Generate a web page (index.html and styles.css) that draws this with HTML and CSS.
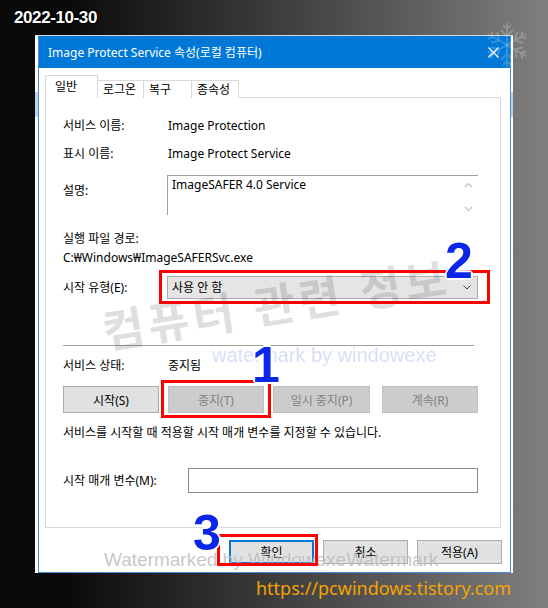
FILE: index.html
```html
<!DOCTYPE html>
<html lang="ko">
  <head>
    <meta charset="UTF-8" />
    <meta name="viewport" content="width=device-width, initial-scale=1.0" />
    <title>Image Protect Service 속성</title>
    <link rel="stylesheet" href="styles.css">
  </head>
  <body>
    <div class="stamp">2022-10-30</div>

    <div class="back-window"><div class="back-head"></div></div>

    <div class="dialog">
      <div class="titlebar">
        <span>Image Protect Service 속성(로컬 컴퓨터)</span>
        <svg class="close" width="11" height="11" viewBox="0 0 11 11">
          <path d="M0.5 0.5L10.5 10.5M10.5 0.5L0.5 10.5" stroke="#fff" stroke-width="1.2" fill="none" />
        </svg>
      </div>
      <div class="dialog-body">
        <div class="tabs">
          <div class="tab active">일반</div>
          <div class="tab">로그온</div>
          <div class="tab">복구</div>
          <div class="tab">종속성</div>
        </div>
        <div class="panel">
          <div class="row">
            <span class="label">서비스 이름:</span>
            <span class="value">Image Protection</span>
          </div>
          <div class="row row-display">
            <span class="label">표시 이름:</span>
            <span class="value">Image Protect Service</span>
          </div>
          <div class="row row-desc">
            <span class="label">설명:</span>
            <div class="textbox">
              <span>ImageSAFER 4.0 Service</span>
              <svg class="scroll" width="9" height="30" viewBox="0 0 9 30">
                <path d="M1 5L4.5 1.5L8 5M1 25L4.5 28.5L8 25" stroke="#c2c2c2" stroke-width="1.2" fill="none" />
              </svg>
            </div>
          </div>
          <div class="row row-path-label">
            <span class="label">실행 파일 경로:</span>
          </div>
          <div class="row row-path">
            <span>C:₩Windows₩ImageSAFERSvc.exe</span>
          </div>
          <div class="row row-type">
            <span class="label">시작 유형(E):</span>
            <div class="select">
              <span>사용 안 함</span>
              <svg width="8" height="5" viewBox="0 0 8 5">
                <path d="M0.5 0.5L4 4L7.5 0.5" stroke="#444" stroke-width="1" fill="none" />
              </svg>
            </div>
          </div>
          <div class="divider"></div>
          <div class="row row-status">
            <span class="label">서비스 상태:</span>
            <span class="value">중지됨</span>
          </div>
          <div class="control-buttons">
            <button class="btn">시작(S)</button>
            <button class="btn" disabled>중지(T)</button>
            <button class="btn wide" disabled>일시 중지(P)</button>
            <button class="btn" disabled>계속(R)</button>
          </div>
          <div class="row row-hint">
            <span>서비스를 시작할 때 적용할 시작 매개 변수를 지정할 수 있습니다.</span>
          </div>
          <div class="row row-param">
            <span class="label-long">시작 매개 변수(M):</span>
            <div class="input"></div>
          </div>
        </div>
        <div class="actions">
          <button class="btn dlg default">확인</button>
          <button class="btn dlg">취소</button>
          <button class="btn dlg">적용(A)</button>
        </div>
      </div>
    </div>

    <!-- overlays added on top of the screenshot -->
    <div class="wm-big">컴퓨터 관련 정보</div>
    <div class="wm-blue">watermark by windowexe</div>
    <div class="wm-grey">Watermarked by WindowexeWatermark</div>

    <div class="callout box-start"></div>
    <div class="callout box-stop"></div>
    <div class="callout box-ok"></div>

    <div class="num num-1">1</div>
    <div class="num num-2">2</div>
    <div class="num num-3">3</div>

    <svg class="flake" width="60" height="50" viewBox="-30 -25 60 50">
      <g stroke="rgba(255,255,255,0.2)" stroke-width="2" fill="none">
        <g id="arm"><path d="M0 0V-22M0-9l-6-6M0-9l6-6M0-16l-4-4M0-16l4-4" /></g>
        <use href="#arm" transform="rotate(60)" />
        <use href="#arm" transform="rotate(120)" />
        <use href="#arm" transform="rotate(180)" />
        <use href="#arm" transform="rotate(240)" />
        <use href="#arm" transform="rotate(300)" />
      </g>
    </svg>

    <div class="url">https://pcwindows.tistory.com</div>
  </body>
</html>
```

FILE: styles.css
```css
html,
body {
  margin: 0;
  padding: 0;
}
body {
  position: relative;
  width: 548px;
  height: 608px;
  overflow: hidden;
  background: linear-gradient(90deg, #0a0a0a 0%, #0a0a0a 12%, #7f7f7f 100%);
  font-family: "Noto Sans", "Noto Sans CJK KR", sans-serif;
  font-size: 12px;
  color: #000;
}
.stamp {
  padding: 9px 0 0 14px;
  font-family: "Liberation Sans", sans-serif;
  font-weight: 700;
  font-size: 17px;
  line-height: 17px;
  letter-spacing: -0.4px;
  color: #fff;
  text-shadow: 0 0 2px #000, 1px 1px 1px #000, -1px -1px 1px #000;
}

/* window behind the dialog, only its edges show */
.back-window {
  position: absolute;
  left: 35px;
  top: 35px;
  width: 478px;
  height: 537px;
  background: #fff;
  border-top: 1px solid #d8d8d8;
}
.back-head {
  margin-top: 56px;
  height: 25px;
  background: #b9d4ef;
}

.dialog {
  position: absolute;
  left: 38px;
  top: 36px;
  width: 473px;
  height: 537px;
  box-sizing: border-box;
  border: 1px solid #4a8cd2;
  border-top: 0;
  background: #fff;
}
.titlebar {
  height: 32px;
  display: flex;
  align-items: center;
  justify-content: space-between;
  padding: 0 11px 0 9px;
  background: #0078d7;
  color: #fff;
  font-size: 12px;
}
.dialog-body {
  padding: 8px 9px 0 6px;
}
.tabs {
  display: flex;
  align-items: flex-end;
  height: 22px;
  position: relative;
  z-index: 1;
  margin-bottom: -1px;
}
.tab {
  height: 18px;
  box-sizing: border-box;
  border: 1px solid #d9d9d9;
  border-bottom: 0;
  padding-left: 5px;
  line-height: 17px;
  background: #fff;
}
.tab:nth-child(2) {
  width: 46px;
  border-left: 0;
}
.tab:nth-child(3) {
  width: 48px;
  border-left: 0;
}
.tab:nth-child(4) {
  width: 47px;
  border-left: 0;
}
.tab.active {
  width: 53px;
  height: 23px;
  padding-left: 9px;
  line-height: 21px;
  border-color: #d9d9d9;
}
.panel {
  width: 456px;
  height: 431px;
  box-sizing: border-box;
  border: 1px solid #d9d9d9;
  padding: 19px 0 0 17px;
}
.row {
  display: flex;
  align-items: center;
  height: 18px;
  line-height: 18px;
  white-space: nowrap;
}
.label {
  width: 104px;
  flex: none;
}
.value {
  padding-left: 1px;
}
.row-display {
  margin-top: 10px;
}
.row-desc {
  margin-top: 12px;
  height: 40px;
  align-items: flex-start;
}
.row-desc .label {
  padding-top: 7px;
}
.textbox {
  position: relative;
  width: 311px;
  height: 40px;
  box-sizing: border-box;
  border-top: 1px solid #a0a0a0;
  border-left: 1px solid #a0a0a0;
  padding: 0 4px;
}
.scroll {
  position: absolute;
  right: 5px;
  top: 6px;
}
.row-path-label {
  margin-top: 15px;
}
.row-path {
  margin-top: 1px;
}
.row-type {
  margin-top: 9px;
  height: 23px;
}
.select {
  width: 311px;
  height: 23px;
  box-sizing: border-box;
  border: 1px solid #adadad;
  background: #e5e5e5;
  display: flex;
  align-items: center;
  justify-content: space-between;
  padding: 0 6px 0 4px;
}
.divider {
  margin-top: 46px;
  width: 411px;
  height: 1px;
  background: #a0a0a0;
}
.row-status {
  margin-top: 11px;
}
.control-buttons {
  display: flex;
  margin-top: 11px;
}
.btn {
  width: 96px;
  height: 27px;
  margin: 0 9px 0 0;
  padding: 0;
  box-sizing: border-box;
  border: 1px solid #adadad;
  background: #e1e1e1;
  font: inherit;
  color: #000;
}
.btn.wide {
  width: 97px;
  margin-right: 12px;
}
.btn:disabled {
  background: #cccccc;
  border-color: #bfbfbf;
  color: #838383;
}
.row-hint {
  margin-top: 11px;
}
.row-param {
  margin-top: 26px;
  height: 25px;
}
.label-long {
  width: 125px;
  flex: none;
}
.input {
  width: 290px;
  height: 25px;
  box-sizing: border-box;
  border: 1px solid #8a8a8a;
  background: #fff;
}
.actions {
  display: flex;
  justify-content: flex-end;
  margin: 12px -1px 0 0;
}
.btn.dlg {
  width: 85px;
  height: 24px;
  margin: 0 0 0 9px;
}
.btn.default {
  border: 1px solid #0078d7;
  box-shadow: inset 0 0 0 1px #0078d7;
}

/* watermarks */
.wm-big {
  position: absolute;
  left: 276px;
  top: 302px;
  transform: translate(-50%, -50%) rotate(-9deg);
  font-family: "Noto Sans CJK KR", sans-serif;
  font-weight: 700;
  font-size: 45px;
  letter-spacing: 4px;
  white-space: nowrap;
  color: rgba(0, 0, 0, 0.14);
}
.wm-blue {
  position: absolute;
  left: 212px;
  top: 345px;
  font-family: "Liberation Sans", sans-serif;
  font-size: 20px;
  line-height: 20px;
  color: rgba(70, 100, 230, 0.22);
  white-space: nowrap;
}
.wm-grey {
  position: absolute;
  left: 104px;
  top: 550px;
  font-family: "Liberation Sans", sans-serif;
  font-size: 19px;
  line-height: 19px;
  color: rgba(150, 150, 150, 0.55);
  text-shadow: 0 0 1px rgba(255, 255, 255, 0.6);
  white-space: nowrap;
}

/* red callout boxes and step numbers */
.callout {
  position: absolute;
  box-sizing: border-box;
  border: 3px solid #f00;
}
.box-start {
  left: 159px;
  top: 270px;
  width: 331px;
  height: 34px;
}
.box-stop {
  left: 161px;
  top: 380px;
  width: 110px;
  height: 38px;
}
.box-ok {
  left: 217px;
  top: 534px;
  width: 101px;
  height: 32px;
}
.num {
  position: absolute;
  font-family: "Liberation Sans", sans-serif;
  font-weight: 700;
  font-size: 50px;
  line-height: 50px;
  color: #0a26e8;
  text-shadow: 1px 1px 0 #fff, -1px -1px 0 #fff, 1px -1px 0 #fff, -1px 1px 0 #fff, 2px 0 0 #fff, -2px 0 0 #fff, 0 2px 0 #fff, 0 -2px 0 #fff;
}
.num-1 {
  left: 252px;
  top: 340px;
}
.num-2 {
  left: 445px;
  top: 236px;
}
.num-3 {
  left: 193px;
  top: 508px;
}
.flake {
  position: absolute;
  left: 477px;
  top: 20px;
}
.url {
  position: absolute;
  left: 256px;
  top: 576px;
  font-size: 18px;
  line-height: 24px;
  color: #f5a300;
  white-space: nowrap;
}
```
